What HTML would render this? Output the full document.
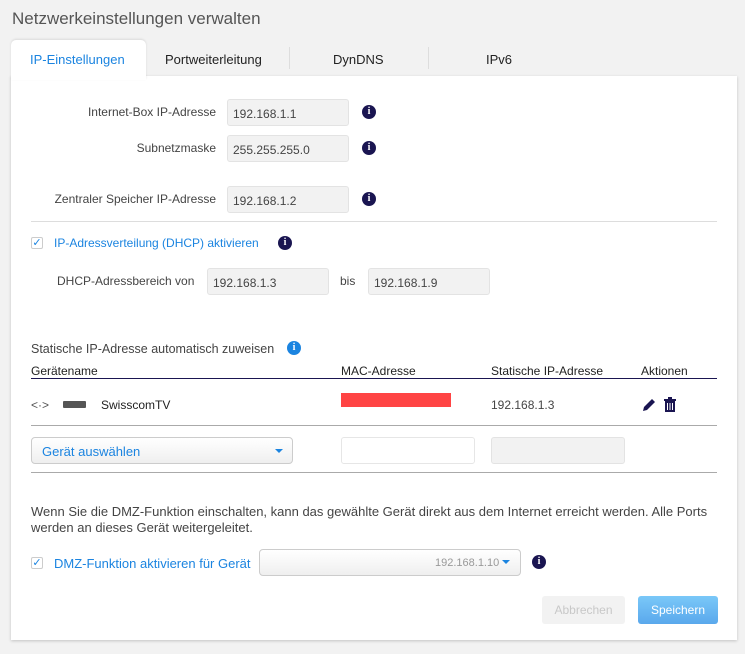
<!DOCTYPE html>
<html><head><meta charset="utf-8"><style>
*{box-sizing:border-box;margin:0;padding:0}
body{width:745px;height:654px;background:#f2f2f2;font-family:"Liberation Sans",sans-serif;font-size:12px;color:#333;position:relative;overflow:hidden}
.a{position:absolute;white-space:nowrap}
.panel{position:absolute;left:11px;top:76px;width:726px;height:564px;background:#fff;box-shadow:0 1px 3px rgba(0,0,0,.2)}
.tab{position:absolute;left:11px;top:40px;width:135px;height:40px;background:#fff;border-radius:5px 5px 0 0;box-shadow:0 -1px 2px rgba(0,0,0,.1)}
.inp{position:absolute;height:27px;background:#f2f2f2;border:1px solid #e3e3e3;border-radius:3px;padding:7px 5px;color:#444}
.lbl{position:absolute;text-align:right;color:#444}
.info{position:absolute;width:14px;height:14px;border-radius:50%;background:#1a1551;color:#fff;font:bold 10px/14px "Liberation Serif",serif;text-align:center}
.hr{position:absolute;left:31px;width:686px;height:1px;background:#ddd}
.cb{position:absolute;width:12px;height:12px;border:1px solid #ccc;border-radius:2px;color:#1b84e0;font-size:11px;line-height:10px;text-align:center}
.blue{color:#1b84e0}
</style></head><body>
<div class="a" style="left:12px;top:9px;font-size:17px;color:#555">Netzwerkeinstellungen verwalten</div>
<div class="panel"></div>
<div class="tab"></div>
<div class="a blue" style="left:30px;top:52px;font-size:13px">IP-Einstellungen</div>
<div class="a" style="left:165px;top:52px;font-size:13px;color:#222">Portweiterleitung</div>
<div class="a" style="left:289px;top:47px;width:1px;height:22px;background:#ddd"></div>
<div class="a" style="left:333px;top:52px;font-size:13px;color:#222">DynDNS</div>
<div class="a" style="left:428px;top:47px;width:1px;height:22px;background:#ddd"></div>
<div class="a" style="left:486px;top:52px;font-size:13px;color:#222">IPv6</div>

<div class="lbl" style="left:40px;width:176px;top:105px">Internet-Box IP-Adresse</div>
<div class="inp" style="left:227px;top:99px;width:122px">192.168.1.1</div>
<div class="info" style="left:362px;top:105px">i</div>
<div class="lbl" style="left:40px;width:176px;top:141px">Subnetzmaske</div>
<div class="inp" style="left:227px;top:135px;width:122px">255.255.255.0</div>
<div class="info" style="left:362px;top:141px">i</div>
<div class="lbl" style="left:20px;width:196px;top:192px">Zentraler Speicher IP-Adresse</div>
<div class="inp" style="left:227px;top:186px;width:122px">192.168.1.2</div>
<div class="info" style="left:362px;top:192px">i</div>
<div class="hr" style="top:221px"></div>

<div class="cb" style="left:31px;top:237px">✓</div>
<div class="a blue" style="left:54px;top:236px">IP-Adressverteilung (DHCP) aktivieren</div>
<div class="info" style="left:278px;top:236px">i</div>
<div class="a" style="left:57px;top:274px;color:#444">DHCP-Adressbereich von</div>
<div class="inp" style="left:207px;top:268px;width:122px">192.168.1.3</div>
<div class="a" style="left:340px;top:274px;color:#444">bis</div>
<div class="inp" style="left:368px;top:268px;width:122px">192.168.1.9</div>

<div class="a" style="left:31px;top:342px;color:#444;font-size:12.5px">Statische IP-Adresse automatisch zuweisen</div>
<div class="info" style="left:287px;top:341px;background:#1b84e0">i</div>
<div class="a" style="left:31px;top:364px;color:#222">Gerätename</div>
<div class="a" style="left:341px;top:364px;color:#222">MAC-Adresse</div>
<div class="a" style="left:491px;top:364px;color:#222">Statische IP-Adresse</div>
<div class="a" style="left:641px;top:364px;color:#222">Aktionen</div>
<div class="a" style="left:31px;top:378px;width:686px;height:1px;background:#1a1551"></div>
<div class="a" style="left:31px;top:398px;color:#555">&lt;·&gt;</div>
<div class="a" style="left:63px;top:401px;width:23px;height:7px;background:#555;border-radius:1px"></div>
<div class="a" style="left:101px;top:398px;color:#222">SwisscomTV</div>
<div class="a" style="left:341px;top:393px;width:110px;height:14px;background:#f44"></div>
<div class="a" style="left:491px;top:398px;color:#444">192.168.1.3</div>
<svg class="a" style="left:641px;top:397px" width="16" height="16" viewBox="0 0 16 16"><path d="M2 14l1-4 8-8 3 3-8 8z" fill="#1a1551"/></svg>
<svg class="a" style="left:663px;top:396px" width="14" height="17" viewBox="0 0 14 17"><path d="M1 3h12v2H1zM5 1h4v2H5zM2 5h10v11H2z" fill="#1a1551"/><path d="M4.5 7v7M7 7v7M9.5 7v7" stroke="#fff"/></svg>
<div class="a" style="left:31px;top:425px;width:686px;height:1px;background:#aaa"></div>
<div class="a" style="left:31px;top:437px;width:262px;height:27px;border:1px solid #ccc;border-radius:4px;background:linear-gradient(#fff,#efefef);padding:6px 10px;font-size:13px" ><span class="blue">Gerät auswählen</span></div>
<div class="a" style="left:275px;top:449px;border:4px solid transparent;border-top:4px solid #1b84e0"></div>
<div class="a" style="left:341px;top:437px;width:134px;height:27px;border:1px solid #e6e6e6;border-radius:3px"></div>
<div class="a" style="left:491px;top:437px;width:134px;height:27px;border:1px solid #e3e3e3;border-radius:3px;background:#f2f2f2"></div>
<div class="a" style="left:31px;top:472px;width:686px;height:1px;background:#aaa"></div>

<div class="a" style="left:31px;top:504px;color:#444;line-height:16px;font-size:13px">Wenn Sie die DMZ-Funktion einschalten, kann das gewählte Gerät direkt aus dem Internet erreicht werden. Alle Ports<br>werden an dieses Gerät weitergeleitet.</div>
<div class="cb" style="left:31px;top:557px">✓</div>
<div class="a blue" style="left:54px;top:556px;font-size:13px">DMZ-Funktion aktivieren für Gerät</div>
<div class="a" style="left:259px;top:549px;width:262px;height:27px;border:1px solid #ccc;border-radius:4px;background:linear-gradient(#fff,#efefef)"></div>
<div class="a" style="left:435px;top:557px;font-size:11px;color:#999">192.168.1.10</div>
<div class="a" style="left:502px;top:560px;border:4px solid transparent;border-top:4px solid #1b84e0"></div>
<div class="info" style="left:532px;top:555px">i</div>
<div class="a" style="left:542px;top:596px;width:83px;height:28px;background:#f2f2f2;border-radius:3px;color:#c8c8c8;text-align:center;line-height:28px">Abbrechen</div>
<div class="a" style="left:638px;top:596px;width:80px;height:28px;background:linear-gradient(#7ac8f8,#5aa8ec);border-radius:3px;color:#fff;text-align:center;line-height:28px">Speichern</div>
</body></html>
